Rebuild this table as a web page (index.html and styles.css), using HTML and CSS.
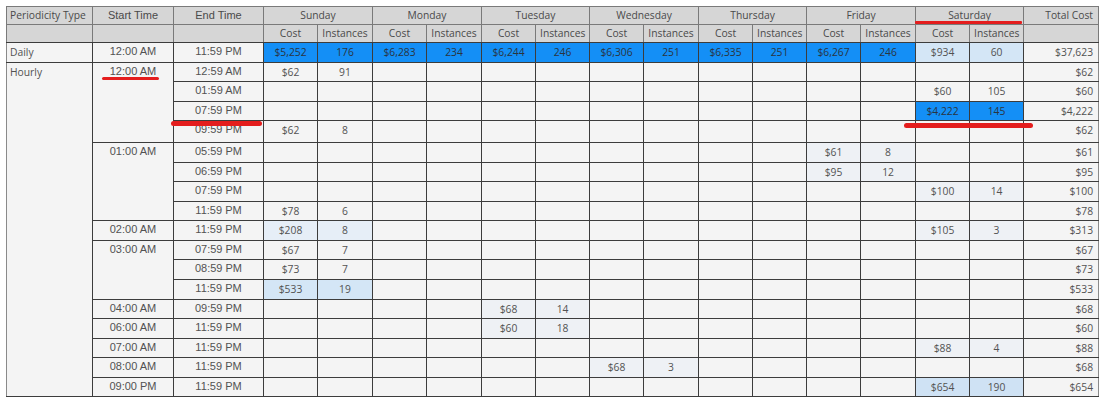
FILE: index.html
```html
<!DOCTYPE html>
<html>
<head>
<meta charset="utf-8">
<link rel="stylesheet" href="styles.css">
</head>
<body>
<div class="page">
<table class="matrix">
<colgroup>
<col style="width:86px"><col style="width:81px"><col style="width:90px">
<col style="width:54px"><col style="width:55px">
<col style="width:54px"><col style="width:55px">
<col style="width:54px"><col style="width:54px">
<col style="width:54px"><col style="width:55px">
<col style="width:54px"><col style="width:54px">
<col style="width:54px"><col style="width:55px">
<col style="width:54px"><col style="width:54px">
<col style="width:75px">
</colgroup>
<thead>
<tr class="h1">
<th class="left">Periodicity Type</th><th class="tm">Start Time</th><th class="tm">End Time</th>
<th colspan="2">Sunday</th><th colspan="2">Monday</th><th colspan="2">Tuesday</th><th colspan="2">Wednesday</th><th colspan="2">Thursday</th><th colspan="2">Friday</th><th colspan="2">Saturday</th>
<th class="right">Total Cost</th>
</tr>
<tr class="h2">
<th></th><th></th><th></th>
<th>Cost</th><th>Instances</th><th>Cost</th><th>Instances</th><th>Cost</th><th>Instances</th><th>Cost</th><th>Instances</th><th>Cost</th><th>Instances</th><th>Cost</th><th>Instances</th><th>Cost</th><th>Instances</th>
<th></th>
</tr>
</thead>
<tbody>
<tr>
<td class="type">Daily</td><td class="tm">12:00 AM</td><td class="tm">11:59 PM</td>
<td class="b">$5,252</td><td class="b">176</td><td class="b">$6,283</td><td class="b">234</td><td class="b">$6,244</td><td class="b">246</td><td class="b">$6,306</td><td class="b">251</td><td class="b">$6,335</td><td class="b">251</td><td class="b">$6,267</td><td class="b">246</td><td class="l1">$934</td><td class="l1">60</td>
<td class="tot">$37,623</td>
</tr>
<tr>
<td class="type" rowspan="17">Hourly</td><td class="tm" rowspan="4">12:00 AM</td><td class="tm">12:59 AM</td>
<td>$62</td><td>91</td><td></td><td></td><td></td><td></td><td></td><td></td><td></td><td></td><td></td><td></td><td></td><td></td>
<td class="tot">$62</td>
</tr>
<tr>
<td class="tm">01:59 AM</td>
<td></td><td></td><td></td><td></td><td></td><td></td><td></td><td></td><td></td><td></td><td></td><td></td><td>$60</td><td>105</td>
<td class="tot">$60</td>
</tr>
<tr>
<td class="tm">07:59 PM</td>
<td></td><td></td><td></td><td></td><td></td><td></td><td></td><td></td><td></td><td></td><td></td><td></td><td class="b">$4,222</td><td class="b">145</td>
<td class="tot">$4,222</td>
</tr>
<tr class="tall">
<td class="tm">09:59 PM</td>
<td>$62</td><td>8</td><td></td><td></td><td></td><td></td><td></td><td></td><td></td><td></td><td></td><td></td><td></td><td></td>
<td class="tot">$62</td>
</tr>
<tr>
<td class="tm" rowspan="4">01:00 AM</td><td class="tm">05:59 PM</td>
<td></td><td></td><td></td><td></td><td></td><td></td><td></td><td></td><td></td><td></td><td class="l3">$61</td><td class="l3">8</td><td></td><td></td>
<td class="tot">$61</td>
</tr>
<tr>
<td class="tm">06:59 PM</td>
<td></td><td></td><td></td><td></td><td></td><td></td><td></td><td></td><td></td><td></td><td class="l3">$95</td><td class="l3">12</td><td></td><td></td>
<td class="tot">$95</td>
</tr>
<tr>
<td class="tm">07:59 PM</td>
<td></td><td></td><td></td><td></td><td></td><td></td><td></td><td></td><td></td><td></td><td></td><td></td><td class="l3">$100</td><td class="l3">14</td>
<td class="tot">$100</td>
</tr>
<tr>
<td class="tm">11:59 PM</td>
<td>$78</td><td>6</td><td></td><td></td><td></td><td></td><td></td><td></td><td></td><td></td><td></td><td></td><td></td><td></td>
<td class="tot">$78</td>
</tr>
<tr>
<td class="tm">02:00 AM</td><td class="tm">11:59 PM</td>
<td class="l2">$208</td><td class="l2">8</td><td></td><td></td><td></td><td></td><td></td><td></td><td></td><td></td><td></td><td></td><td class="l3">$105</td><td class="l3">3</td>
<td class="tot">$313</td>
</tr>
<tr>
<td class="tm" rowspan="3">03:00 AM</td><td class="tm">07:59 PM</td>
<td>$67</td><td>7</td><td></td><td></td><td></td><td></td><td></td><td></td><td></td><td></td><td></td><td></td><td></td><td></td>
<td class="tot">$67</td>
</tr>
<tr>
<td class="tm">08:59 PM</td>
<td>$73</td><td>7</td><td></td><td></td><td></td><td></td><td></td><td></td><td></td><td></td><td></td><td></td><td></td><td></td>
<td class="tot">$73</td>
</tr>
<tr>
<td class="tm">11:59 PM</td>
<td class="l1">$533</td><td class="l1">19</td><td></td><td></td><td></td><td></td><td></td><td></td><td></td><td></td><td></td><td></td><td></td><td></td>
<td class="tot">$533</td>
</tr>
<tr>
<td class="tm">04:00 AM</td><td class="tm">09:59 PM</td>
<td></td><td></td><td></td><td></td><td class="l3">$68</td><td class="l3">14</td><td></td><td></td><td></td><td></td><td></td><td></td><td></td><td></td>
<td class="tot">$68</td>
</tr>
<tr>
<td class="tm">06:00 AM</td><td class="tm">11:59 PM</td>
<td></td><td></td><td></td><td></td><td class="l3">$60</td><td class="l3">18</td><td></td><td></td><td></td><td></td><td></td><td></td><td></td><td></td>
<td class="tot">$60</td>
</tr>
<tr>
<td class="tm">07:00 AM</td><td class="tm">11:59 PM</td>
<td></td><td></td><td></td><td></td><td></td><td></td><td></td><td></td><td></td><td></td><td></td><td></td><td class="l3">$88</td><td class="l3">4</td>
<td class="tot">$88</td>
</tr>
<tr>
<td class="tm">08:00 AM</td><td class="tm">11:59 PM</td>
<td></td><td></td><td></td><td></td><td></td><td></td><td class="l3">$68</td><td class="l3">3</td><td></td><td></td><td></td><td></td><td></td><td></td>
<td class="tot">$68</td>
</tr>
<tr>
<td class="tm">09:00 PM</td><td class="tm">11:59 PM</td>
<td></td><td></td><td></td><td></td><td></td><td></td><td></td><td></td><td></td><td></td><td></td><td></td><td class="l1b">$654</td><td class="l1b">190</td>
<td class="tot">$654</td>
</tr>
</tbody>
</table>
<div class="mark m1"></div>
<div class="mark m2"></div>
<div class="mark m3"></div>
<div class="mark m4"></div>
</div>
</body>
</html>
```
FILE: styles.css
```css
html, body {
  margin: 0;
  padding: 0;
  background: #ffffff;
}
.page {
  position: relative;
  padding: 6px;
}
.matrix {
  border-collapse: collapse;
  table-layout: fixed;
  width: 1092px;
  font-family: "Open Sans", "Noto Sans", sans-serif;
  font-size: 10.3px;
  color: #525252;
}
.matrix th,
.matrix td {
  border: 1px solid #3c3c3c;
  padding: 0 4px;
  vertical-align: top;
  text-align: center;
  white-space: nowrap;
  overflow: hidden;
  font-weight: normal;
}
.matrix th {
  background: #d6d6d6;
  height: 17px;
  line-height: 16px;
  border-color: #7a7a7a;
  color: #4a4a4a;
}
.matrix thead tr.h2 th {
  border-bottom-color: #3c3c3c;
}
.matrix th.left { text-align: left; padding-left: 3px; }
.matrix th.right { text-align: right; padding-right: 5px; }
.matrix td {
  background: #f4f4f4;
  height: 18.55px;
  line-height: 18px;
}
.matrix tr.tall td { height: 21px; }
.matrix td.type {
  text-align: left;
  padding-left: 3px;
  border-left-color: #8a8a8a;
}
.matrix td.tm,
.matrix th.tm {
  font-family: "Liberation Sans", Arial, sans-serif;
  font-size: 11px;
}
.matrix td.tm { line-height: 16px; }
.matrix td.tot {
  text-align: right;
  padding-right: 5px;
  border-right-color: #8a8a8a;
}
.matrix td.b { background: #148ff6; color: #2a3440; }
.matrix td.l1 { background: #d4e6f6; }
.matrix td.l1b { background: #cfe2f4; }
.matrix td.l2 { background: #e6eef7; }
.matrix td.l3 { background: #eef1f5; }

.mark {
  position: absolute;
  background: #e41d1d;
  border-radius: 3px;
}
.m1 { left: 102px; top: 77px; width: 57px; height: 2.5px; }
.m2 { left: 171px; top: 121px; width: 91px; height: 5px; }
.m3 { left: 915px; top: 21px; width: 107px; height: 3px; border-radius: 1px; }
.m4 { left: 904px; top: 123px; width: 129px; height: 5px; }
```
